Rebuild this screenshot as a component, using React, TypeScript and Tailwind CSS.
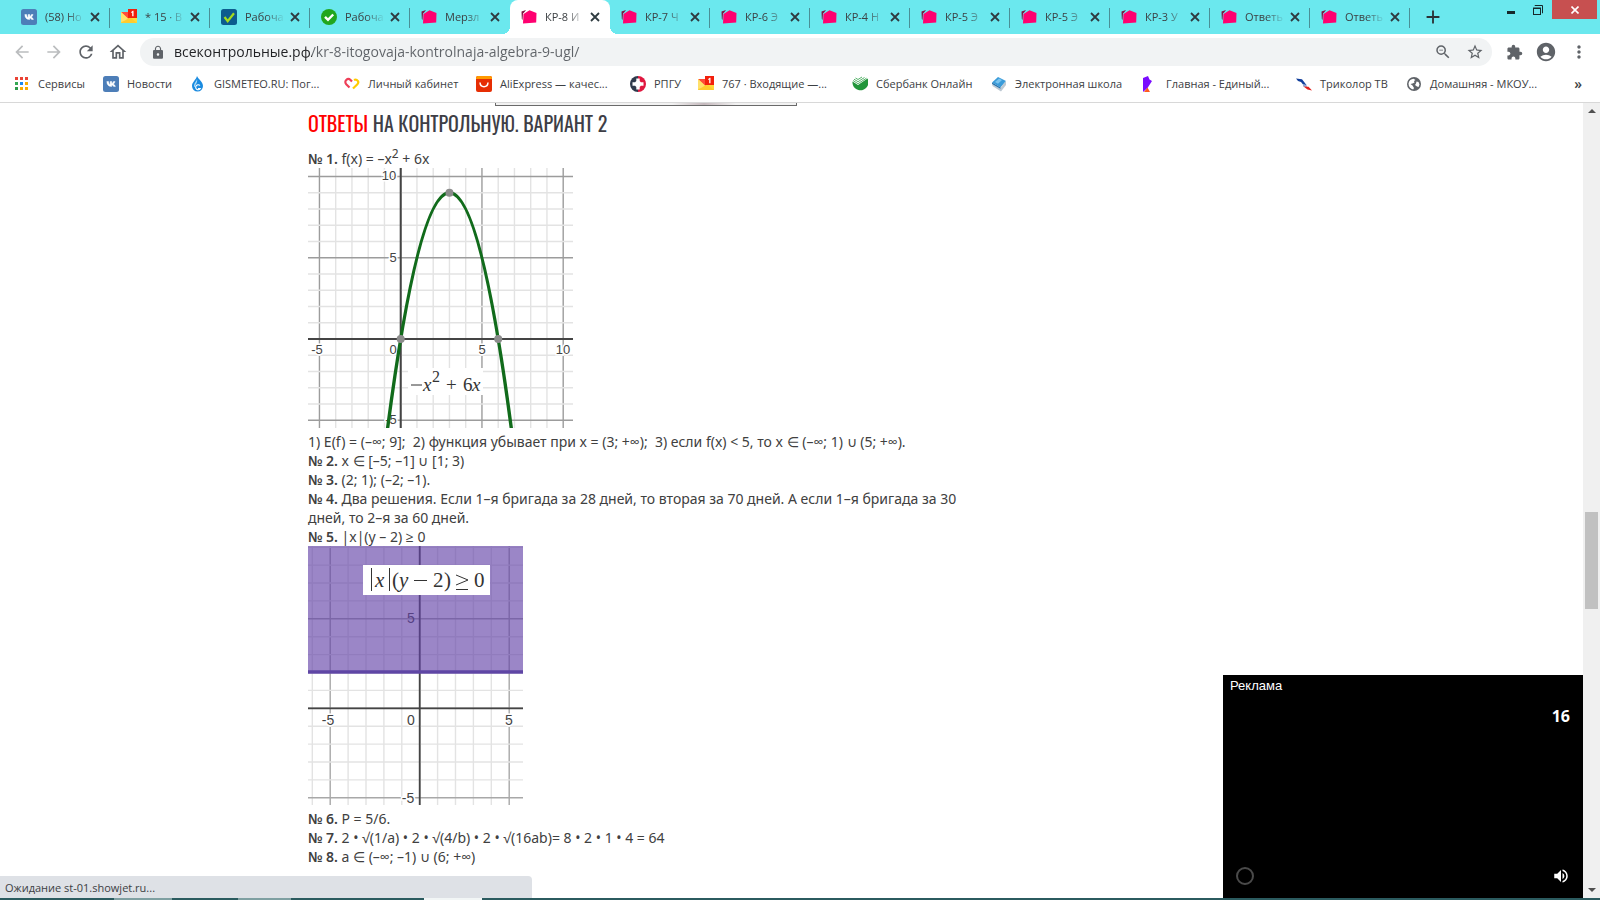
import type { ReactNode } from "react";
import { useState } from "react";
import {
  MdAccountCircle,
  MdAdd,
  MdArrowBack,
  MdArrowForward,
  MdExtension,
  MdLock,
  MdMoreVert,
  MdOutlineHome,
  MdRefresh,
  MdStarBorder,
  MdVolumeUp,
  MdZoomOut,
} from "react-icons/md";

function VkIcon() {
  return (
    <svg viewBox="0 0 16 16" className="h-4 w-4">
      <rect width="16" height="16" rx="2.5" fill="#4d7eb8" />
      <path
        d="M3 5.5h1.8c.1 1.8.9 3 1.5 3.1V5.5H8v1.900c.7-.1 1.300-.9 1.600-1.900h1.700c-.3 1.200-1 2-1.600 2.500.7.4 1.500 1.200 1.900 2.500H9.800c-.3-.8-.9-1.500-1.800-1.600v1.600h-.5C4.700 10.500 3.100 8.700 3 5.500z"
        fill="#fff"
        stroke="#fff"
        strokeWidth=".4"
        transform="translate(.8 0)"
      />
    </svg>
  );
}

function MailIcon() {
  return (
    <svg viewBox="0 0 16 16" className="h-4 w-4">
      <path d="M0 3h10v5h6v6H0z" fill="#ffd93b" />
      <path d="M0 14l6-5h4l6 5z" fill="#ffcb2e" />
      <path d="M0 3h9v5L7 9.500z" fill="#ff4b3a" />
      <path d="M0 3l7 6.500L3 12 0 13z" fill="#ffe06b" />
      <rect x="7" y="0" width="9" height="9" fill="#f21f0c" />
      <path d="M10.200 3l1.500-1.200h.8V7.200h-1.300V3.500l-1 .6z" fill="#fff" />
    </svg>
  );
}

function BlueCheckIcon() {
  return (
    <svg viewBox="0 0 16 16" className="h-4 w-4">
      <rect width="16" height="16" rx="2.500" fill="#0c5c8e" />
      <path d="M3.500 8l3.200 4.200L13 4.200" fill="none" stroke="#a4dc1c" strokeWidth="2.200" />
    </svg>
  );
}

function GreenCheckIcon() {
  return (
    <svg viewBox="0 0 16 16" className="h-4 w-4">
      <circle cx="8" cy="8" r="8" fill="#21a61e" />
      <path d="M4 7.800l3 3 5.200-5.300" fill="none" stroke="#fff" strokeWidth="2.400" />
    </svg>
  );
}

function FolderIcon() {
  return (
    <svg viewBox="0 0 16 16" className="h-4 w-4">
      <path d="M.5 2.500L5 1 3.500 3 2 4.500 1.500 11 .8 10z" fill="#7c1440" />
      <path d="M2.500 5L8.500 1.200 15.500 4 15.200 13.500 2 14.500z" fill="#ff0070" />
    </svg>
  );
}

function AppsIcon() {
  const colors = ["#ea4335", "#ea4335", "#ea4335", "#34a853", "#1a88f0", "#f9ab00", "#2e9a4a", "#f9ab00", "#f9ab00"];
  return (
    <svg viewBox="0 0 16 16" className="h-4 w-4">
      {colors.map((c, i) => (
        <rect key={i} x={1 + (i % 3) * 5} y={1 + Math.floor(i / 3) * 5} width="3" height="3" fill={c} />
      ))}
    </svg>
  );
}

function DropIcon() {
  return (
    <svg viewBox="0 0 16 16" className="h-4 w-4">
      <path d="M7 0c1 3 6 5.500 6 10a5.500 5.500 0 0 1-11 0c0-4 4-6 5-10z" fill="#1a8be0" />
      <path d="M7 3c0 2-3 4-3 6.500 0 1 .5 1.500 1 1.500 0-3 3-4 2-8z" fill="#a9dcfa" />
      <path d="M10 9.500a2.500 2.500 0 1 0 .3 3H8" fill="none" stroke="#fff" strokeWidth="1.100" />
    </svg>
  );
}

function HeartIcon() {
  return (
    <svg viewBox="0 0 16 16" className="h-4 w-4" fill="none" strokeWidth="2.200">
      <path d="M5.500 11.500L2.200 8.200a3 3 0 0 1 4.300-4.200l1.500 1.500" stroke="#ee3f58" />
      <path d="M10 4a3 3 0 0 1 3.800.9c.9 1.300.5 2.400-.4 3.300L9 12.500" stroke="#ffcc00" />
    </svg>
  );
}

function AliIcon() {
  return (
    <svg viewBox="0 0 16 16" className="h-4 w-4">
      <rect width="16" height="16" rx="2" fill="#e62e04" />
      <path d="M2 0h12a2 2 0 0 1 2 2v1H0V2a2 2 0 0 1 2-2z" fill="#ff9a00" />
      <path d="M4 6.500c.3 5.500 7.700 5.500 8 0" fill="none" stroke="#fff" strokeWidth="1.500" />
    </svg>
  );
}

function RpguIcon() {
  return (
    <svg viewBox="0 0 16 16" className="h-4 w-4">
      <path d="M8 0a8 8 0 0 0 0 16z" fill="#2f3a4c" />
      <path d="M8 0a8 8 0 0 1 0 16z" fill="#e0173f" />
      <path d="M6.300 2.500h3.400v2.600l1.200 1.200h2.600v3.400h-2.600l-1.200 1.200v2.600H6.300v-2.600L5.100 9.700H2.500V6.300h2.600l1.200-1.200z" fill="#fff" />
    </svg>
  );
}

function SberIcon() {
  return (
    <svg viewBox="0 0 16 16" className="h-4 w-4">
      <path d="M.5 5.500L6 9l9.500-6.500A8 8 0 1 1 .5 5.500z" fill="#21963a" />
      <path d="M1 4.500l5 3.200 8.500-5.500M2 3.200l4 2.500 6.500-4.200M3.500 2l2.500 1.500 4-2.500" fill="none" stroke="#56b36a" strokeWidth="1" />
    </svg>
  );
}

function BookIcon() {
  return (
    <svg viewBox="0 0 16 16" className="h-4 w-4">
      <path d="M1 6.500L7 1l8 4-5.500 6.500z" fill="#3a9bd9" />
      <path d="M4 6l4-3.500 3 1.500-4 3.700z" fill="#7cc4ee" />
      <path d="M1 6.500l8.500 5L15 5v4l-5 6.500L1.500 10z" fill="#bcc8d2" />
      <path d="M1 6.500l8.500 5v1.300L1.200 8z" fill="#1c6fae" />
    </svg>
  );
}

function EdinyIcon() {
  return (
    <svg viewBox="0 0 16 16" className="h-4 w-4">
      <path d="M1 2l5-2 1.500 3.500L10 5l-4.500 7L1 16z" fill="#7a0cff" />
      <path d="M2 16l3.500-4.500L8 16z" fill="#ff5a1f" />
    </svg>
  );
}

function TricolorIcon() {
  return (
    <svg viewBox="0 0 16 16" className="h-4 w-4">
      <path d="M0 2.500l6 .8L10.500 9 7 8.500 5 6 2 5z" fill="#123f9c" />
      <path d="M7 8.500l3.500.5.5 2-4-.5z" fill="#8fa6d4" />
      <path d="M7.500 10.500l5 .3L16 14.500l-4.500-1z" fill="#e3211c" />
    </svg>
  );
}

function GlobeIcon() {
  return (
    <svg viewBox="0 0 16 16" className="h-4 w-4">
      <circle cx="8" cy="8" r="7" fill="#5f6368" />
      <path d="M2.500 7.500C3 4.500 5 3 7.500 2.800L9.500 4 8 5l.5 1.500-2 1L4.500 8l2 1.500L8 12l-.8 1.500C4.500 13 2.500 10.500 2.500 7.500z" fill="#fff" />
      <path d="M10.500 5.500l2 .5 1 2.500-1 2.500-1.500-.5L9 9l1-1.500z" fill="#fff" />
    </svg>
  );
}

const TABS: { title: string; icon: () => ReactNode }[] = [
  { title: "(58) Но", icon: VkIcon },
  { title: "* 15 · В", icon: MailIcon },
  { title: "Рабоча", icon: BlueCheckIcon },
  { title: "Рабоча", icon: GreenCheckIcon },
  { title: "Мерзл", icon: FolderIcon },
  { title: "КР-8 И", icon: FolderIcon },
  { title: "КР-7 Ч", icon: FolderIcon },
  { title: "КР-6 Э", icon: FolderIcon },
  { title: "КР-4 Н", icon: FolderIcon },
  { title: "КР-5 Э", icon: FolderIcon },
  { title: "КР-5 Э", icon: FolderIcon },
  { title: "КР-3 У", icon: FolderIcon },
  { title: "Ответь", icon: FolderIcon },
  { title: "Ответь", icon: FolderIcon },
];

const BOOKMARKS: { title: string; icon: () => ReactNode; width: string }[] = [
  { title: "Сервисы", icon: AppsIcon, width: "w-[89px]" },
  { title: "Новости", icon: VkIcon, width: "w-[87px]" },
  { title: "GISMETEO.RU: Пог...", icon: DropIcon, width: "w-[154px]" },
  { title: "Личный кабинет", icon: HeartIcon, width: "w-[132px]" },
  { title: "AliExpress — качес...", icon: AliIcon, width: "w-[154px]" },
  { title: "РПГУ", icon: RpguIcon, width: "w-[68px]" },
  { title: "767 · Входящие —...", icon: MailIcon, width: "w-[154px]" },
  { title: "Сбербанк Онлайн", icon: SberIcon, width: "w-[139px]" },
  { title: "Электронная школа", icon: BookIcon, width: "w-[151px]" },
  { title: "Главная - Единый...", icon: EdinyIcon, width: "w-[154px]" },
  { title: "Триколор ТВ", icon: TricolorIcon, width: "w-[110px]" },
  { title: "Домашняя - МКОУ...", icon: GlobeIcon, width: "w-[154px]" },
];

function TabStrip() {
  const [active, setActive] = useState(5);
  return (
    <div className="flex h-[34px] shrink-0 items-start bg-[#6be8ee] pl-2.5">
      {TABS.map((tab, i) => {
        const Icon = tab.icon;
        const on = i === active;
        return (
          <div
            key={i}
            className={
              on
                ? "relative flex h-[34px] w-[100px] items-center rounded-t-lg bg-white pl-[11px]"
                : "relative flex h-[34px] w-[100px] items-center pl-[11px]"
            }
          >
            {on ? (
              <>
                <span className="absolute bottom-0 -left-2 h-2 w-2 bg-[radial-gradient(circle_at_0_0,transparent_8px,white_8px)]" />
                <span className="absolute -right-2 bottom-0 h-2 w-2 bg-[radial-gradient(circle_at_100%_0,transparent_8px,white_8px)]" />
              </>
            ) : null}
            <button className="flex w-[66px] items-center gap-2 text-left" onClick={() => setActive(i)}>
              <span className="shrink-0">
                <Icon />
              </span>
              <span className="w-[42px] text-[11px] whitespace-nowrap text-[#3c4043] [mask-image:linear-gradient(to_right,black_50%,transparent_95%)]">
                {tab.title}
              </span>
            </button>
            <button className="ml-[3px] text-[#2f3b40]" aria-label="Закрыть вкладку">
              <svg viewBox="0 0 10 10" className="h-2.5 w-2.5" stroke="currentColor" strokeWidth="1.800">
                <path d="M1 1l8 8M9 1l-8 8" />
              </svg>
            </button>
            {!on && i !== active - 1 ? (
              <span className="absolute top-2 right-0 h-5 w-px bg-[#4a8f96]" />
            ) : null}
          </div>
        );
      })}
      <button className="mt-1.5 ml-3 text-[#2b3236]" aria-label="Новая вкладка">
        <MdAdd className="h-[22px] w-[22px]" />
      </button>
      <div className="ml-auto flex h-5 items-start pr-[3px]">
        <button className="flex h-5 w-[26px] items-end justify-center pb-1.5" aria-label="Свернуть">
          <span className="h-[3px] w-2 bg-[#16282a]" />
        </button>
        <button className="flex h-5 w-7 items-center justify-center" aria-label="Восстановить">
          <svg viewBox="0 0 12 12" className="h-3 w-3" fill="none" stroke="#16282a">
            <path d="M3 2V1.500h7.500V9H10" />
            <rect x="1.500" y="4" width="7" height="6.500" />
            <path d="M1 4.500h8" />
          </svg>
        </button>
        <button className="flex h-[19px] w-[45px] items-center justify-center bg-[#c75050] text-white" aria-label="Закрыть">
          <svg viewBox="0 0 8 8" className="h-2 w-2" stroke="#fff" strokeWidth="1.600">
            <path d="M.5.5l7 7M7.500.5l-7 7" />
          </svg>
        </button>
      </div>
    </div>
  );
}

function Toolbar() {
  const [url, setUrl] = useState("всеконтрольные.рф/kr-8-itogovaja-kontrolnaja-algebra-9-ugl/");
  return (
    <div className="flex h-9 shrink-0 items-center bg-white pl-3 text-[#5f6368]">
      <div className="flex w-32 gap-3">
        <button className="text-[#bbbdbf]" aria-label="Назад">
          <MdArrowBack className="h-5 w-5" />
        </button>
        <button className="text-[#bbbdbf]" aria-label="Вперёд">
          <MdArrowForward className="h-5 w-5" />
        </button>
        <button aria-label="Обновить">
          <MdRefresh className="h-5 w-5" />
        </button>
        <button aria-label="Главная страница">
          <MdOutlineHome className="h-5 w-5" />
        </button>
      </div>
      <div className="flex h-7 flex-1 items-center rounded-full bg-[#f1f3f4] pr-2 pl-2.5">
        <MdLock className="h-[15px] w-4" />
        <input
          aria-label="Адресная строка"
          className="ml-2 min-w-0 flex-1 bg-[linear-gradient(to_right,#202124_138px,#5f6368_138px)] bg-clip-text text-sm text-transparent outline-none"
          value={url}
          onChange={(e) => setUrl(e.target.value)}
        />
        <button aria-label="Масштаб">
          <MdZoomOut className="h-[18px] w-[18px]" />
        </button>
        <button className="ml-3.5" aria-label="В закладки">
          <MdStarBorder className="h-[18px] w-[18px]" />
        </button>
      </div>
      <div className="flex w-[108px] items-center pl-3.5">
        <button aria-label="Расширения">
          <MdExtension className="h-[17px] w-[17px]" />
        </button>
        <button className="ml-3" aria-label="Профиль">
          <MdAccountCircle className="h-[22px] w-[22px]" />
        </button>
        <button className="ml-3" aria-label="Меню">
          <MdMoreVert className="h-5 w-5" />
        </button>
      </div>
    </div>
  );
}

function BookmarksBar() {
  return (
    <nav className="flex h-[33px] shrink-0 items-center border-b border-[#d8d8d8] bg-white pr-[18px] pb-1 pl-3.5 text-[11px] text-[#3c4043]">
      {BOOKMARKS.map((b) => {
        const Icon = b.icon;
        return (
          <a key={b.title} href="#" className={`flex shrink-0 items-center gap-2 ${b.width}`}>
            <span className="shrink-0">
              <Icon />
            </span>
            <span className="whitespace-nowrap">{b.title}</span>
          </a>
        );
      })}
      <button className="ml-auto text-sm font-semibold" aria-label="Другие закладки">
        »
      </button>
    </nav>
  );
}

function ParabolaGraph() {
  const ox = 92.7;
  const oy = 171;
  const u = 16.25;
  const xs = Array.from({ length: 16 }, (_, i) => i - 5);
  const ys = Array.from({ length: 16 }, (_, i) => i - 5);
  return (
    <svg viewBox="0 0 265 260" className="inline-block h-[260px] w-[265px] align-baseline" fontFamily="Liberation Sans, sans-serif">
      {xs.map((x) => (
        <path key={x} d={`M${ox + x * u} 0V260`} stroke={x % 5 ? "#e3e3e3" : "#9c9c9c"} strokeWidth="1.4" />
      ))}
      {ys.map((y) => (
        <path key={y} d={`M0 ${oy - y * u}H265`} stroke={y % 5 ? "#e3e3e3" : "#9c9c9c"} strokeWidth="1.4" />
      ))}
      <path d={`M${ox} 0V260M0 ${oy}H265`} stroke="#444" strokeWidth="2" />
      <g fontSize="13" fill="#444" stroke="#fff" strokeWidth="3" paintOrder="stroke" textAnchor="middle">
        <text x="81" y="12">10</text>
        <text x="85" y="94">5</text>
        <text x="85" y="186">0</text>
        <text x="9" y="186">-5</text>
        <text x="174" y="186">5</text>
        <text x="255" y="186">10</text>
        <text x="83" y="256">-5</text>
      </g>
      <path
        d={`M${ox - u} ${oy + 7 * u}Q${ox + 3 * u} ${oy - 25 * u} ${ox + 7 * u} ${oy + 7 * u}`}
        fill="none"
        stroke="#116b1b"
        strokeWidth="3.4"
      />
      <circle cx={ox} cy={oy} r="4" fill="#8c8c8c" />
      <circle cx={ox + 6 * u} cy={oy} r="4" fill="#8c8c8c" />
      <circle cx={ox + 3 * u} cy={oy - 9 * u} r="4" fill="#8c8c8c" />
      <rect x="100" y="200" width="75" height="27" fill="#fff" />
      <g fontFamily="Liberation Serif, serif" fontSize="19" fill="#333">
        <path d="M103 217H114" stroke="#333" />
        <text x="115" y="223" fontStyle="italic">x</text>
        <text x="124" y="214" fontSize="16">2</text>
        <text x="138" y="223">+</text>
        <text x="155" y="223">6</text>
        <text x="164" y="223" fontStyle="italic">x</text>
      </g>
    </svg>
  );
}

function RegionGraph() {
  const ox = 111.7;
  const oy = 162.3;
  const u = 17.9;
  const xs = Array.from({ length: 12 }, (_, i) => i - 6);
  const ys = Array.from({ length: 15 }, (_, i) => i - 5);
  return (
    <svg viewBox="0 0 215 259" className="inline-block h-[259px] w-[215px] align-baseline" fontFamily="Liberation Sans, sans-serif">
      {xs.map((x) => (
        <path key={x} d={`M${ox + x * u} 0V259`} stroke={x % 5 ? "#e3e3e3" : "#a8a8a8"} strokeWidth="1.4" />
      ))}
      {ys.map((y) => (
        <path key={y} d={`M0 ${oy - y * u}H215`} stroke={y % 5 ? "#e3e3e3" : "#a8a8a8"} strokeWidth="1.4" />
      ))}
      <path d={`M${ox} 0V259M0 ${oy}H215`} stroke="#444" strokeWidth="1.8" />
      <g fontSize="14" fill="#444" stroke="#fff" strokeWidth="3" paintOrder="stroke" textAnchor="middle">
        <text x="103" y="77" stroke="none">5</text>
        <text x="103" y="179">0</text>
        <text x="20" y="179">-5</text>
        <text x="201" y="179">5</text>
        <text x="100" y="257">-5</text>
      </g>
      <rect width="215" height="126" fill="#6040a6" fillOpacity=".63" />
      <path d="M0 126H215" stroke="#5f46a5" strokeWidth="3.4" />
      <rect x="55" y="19" width="127" height="30" fill="#fff" />
      <g fontFamily="Liberation Serif, serif" fontSize="21" fill="#333">
        <path d="M63.5 22V45M81.5 22V45M106 34.5H119M148 43.5H160M148 29l12 5-12 5" fill="none" stroke="#333" />
        <text x="67" y="41" fontStyle="italic">x</text>
        <text x="84" y="41">(</text>
        <text x="91" y="41" fontStyle="italic">y</text>
        <text x="125" y="41">2</text>
        <text x="136" y="41">)</text>
        <text x="166" y="41">0</text>
      </g>
    </svg>
  );
}

function Answers() {
  return (
    <main className="min-w-0 flex-1 overflow-hidden bg-white">
      <div className="mx-auto w-full max-w-[967px]">
        <div className="ml-[187px] flex h-[3px] w-[302px] border-x border-b border-[#6a6a6a] bg-[#f2f2f2]">
          <span className="ml-[176px] w-16 bg-linear-to-r from-[#f2f2f2] via-[#c5b9bd] to-[#f2f2f2]" />
        </div>
        <h2 className="mt-[5px] font-['Oswald','Open_Sans_Condensed','Roboto_Condensed','Liberation_Sans_Narrow',sans-serif] text-xl leading-6 text-[#3e3e46]">
          <span className="text-[#ff0000]">ОТВЕТЫ</span> НА КОНТРОЛЬНУЮ. ВАРИАНТ 2
        </h2>
        <div className="mt-3.5 max-w-[670px] font-['Noto_Sans','Open_Sans',sans-serif] text-sm leading-[19px] text-[#404040]">
          <p>
            <b className="font-semibold">№ 1.</b> f(x) = –x<sup className="text-xs leading-none">2</sup> + 6x
            <br />
            <ParabolaGraph />
            <br />
            1) E(f) = (–∞; 9];&nbsp; 2) функция убывает при x = (3; +∞);&nbsp; 3) если f(x) &lt; 5, то x ∈ (–∞; 1) ∪ (5; +∞).
            <br />
            <b className="font-semibold">№ 2.</b> x ∈ [–5; –1] ∪ [1; 3)
            <br />
            <b className="font-semibold">№ 3.</b> (2; 1); (–2; –1).
            <br />
            <b className="font-semibold">№ 4.</b> Два решения. Если 1–я бригада за 28 дней, то вторая за 70 дней. А если 1–я бригада за 30 дней, то 2–я за 60 дней.
            <br />
            <b className="font-semibold">№ 5.</b> |x|(y – 2) ≥ 0
            <br />
            <RegionGraph />
            <br />
            <b className="font-semibold">№ 6.</b> P = 5/6.
            <br />
            <b className="font-semibold">№ 7.</b> 2 • √(1/a) • 2 • √(4/b) • 2 • √(16ab)= 8 • 2 • 1 • 4 = 64
            <br />
            <b className="font-semibold">№ 8.</b> a ∈ (–∞; –1) ∪ (6; +∞)
          </p>
        </div>
      </div>
    </main>
  );
}

function Scrollbar() {
  return (
    <div className="flex w-[17px] shrink-0 flex-col items-center bg-[#f0f0f0] py-1.5">
      <svg viewBox="0 0 8 4" className="h-1 w-2 shrink-0" fill="#505050">
        <path d="M4 0l4 4H0z" />
      </svg>
      <div className="flex-[399]" />
      <div className="h-[97px] w-[13px] shrink-0 bg-[#c1c1c1]" />
      <div className="flex-[279]" />
      <svg viewBox="0 0 8 4" className="h-1 w-2 shrink-0" fill="#505050">
        <path d="M0 0h8L4 4z" />
      </svg>
    </div>
  );
}

function VideoAd() {
  return (
    <aside className="absolute right-[17px] bottom-0 flex h-[223px] w-[360px] flex-col bg-black text-white">
      <div className="px-[7px] pt-[3px] font-['Liberation_Sans',sans-serif] text-[13px] leading-4">Реклама</div>
      <div className="mt-3 pr-[13px] text-right text-base leading-5 font-bold">16</div>
      <div className="mt-auto flex items-center justify-between px-[13px] pb-[13px]">
        <span className="h-[18px] w-[18px] rounded-full border-2 border-[#4a4a4a]" />
        <button aria-label="Звук">
          <MdVolumeUp className="h-[18px] w-[18px]" />
        </button>
      </div>
    </aside>
  );
}

export default function App() {
  return (
    <div className="flex h-screen flex-col overflow-hidden bg-white font-['Open_Sans','Noto_Sans',sans-serif]">
      <TabStrip />
      <Toolbar />
      <BookmarksBar />
      <div className="relative flex min-h-0 flex-1">
        <Answers />
        <Scrollbar />
        <VideoAd />
        <div className="absolute bottom-0 left-0 h-[22px] w-[532px] rounded-tr bg-[#dee1e6] pl-[5px] text-[11px] leading-6 text-[#3c4043]">
          Ожидание st-01.showjet.ru...
        </div>
      </div>
      <div className="flex h-0.5 shrink-0 bg-[#2b5b5f]">
        <span className="ml-[114px] w-[58px] bg-[#7fa0a2]" />
        <span className="ml-[66px] w-[53px] bg-[#7fa0a2]" />
        <span className="ml-[133px] w-[58px] bg-[#f2f6f6]" />
      </div>
    </div>
  );
}
